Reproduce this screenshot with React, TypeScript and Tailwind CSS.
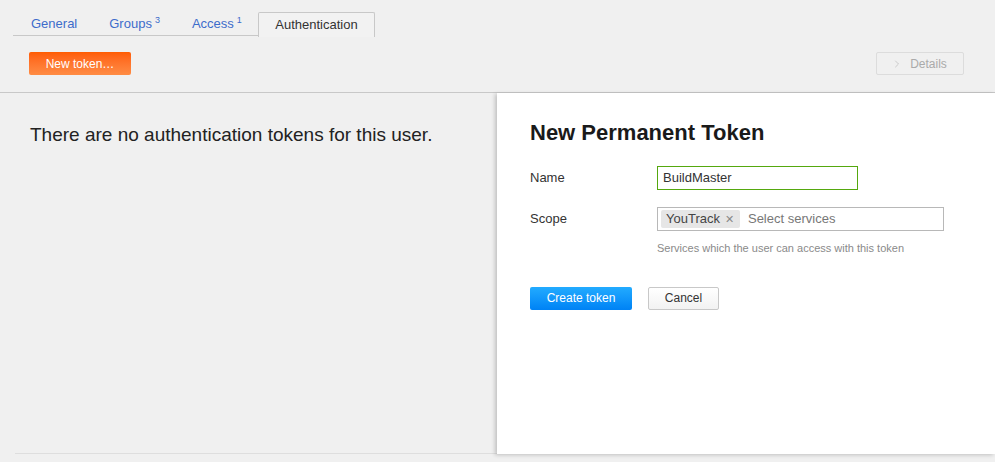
import { ChevronRight } from "lucide-react";

const tabs = [
  { label: "General" },
  { label: "Groups", count: 3 },
  { label: "Access", count: 1 },
];

export default function App() {
  return (
    <div className="w-[995px] h-[462px] overflow-hidden bg-[#f0f0f0] font-['Liberation_Sans',Arial,sans-serif] text-[#333]">
      {/* Cabeçalho com abas e barra de ações */}
      <div className="border-b border-[#c8c8c8] h-[93px]">
        <div className="pt-[12px] pl-[13px]">
          <div className="flex w-[362px] h-[24px] border-b border-[#c8c8c8] text-[13px]">
            {tabs.map((t) => (
              <div key={t.label} className="px-[16px] first:pl-[18px] flex items-center text-[#3d6ccb]">
                {t.label}
                {t.count && <sup className="text-[9px] ml-[3px] -top-[4px]">{t.count}</sup>}
              </div>
            ))}
            <div className="ml-auto w-[117px] h-[25px] flex items-center justify-center border border-b-0 border-[#c8c8c8] rounded-t-[2px] bg-[#f2f2f2] text-[#333]">
              Authentication
            </div>
          </div>
        </div>
        <div className="flex items-center justify-between pl-[29px] pr-[31px] mt-[16px]">
          <button className="w-[102px] h-[23px] rounded-[2px] bg-gradient-to-b from-[#ff5c00] to-[#ff8c44] text-white text-[12px]">
            New token…
          </button>
          <button className="w-[88px] h-[23px] rounded-[2px] border border-[#dcdcdc] flex items-center justify-center gap-[7px] pr-[2px] text-[12px] text-[#aaa]">
            <ChevronRight size={12} strokeWidth={1.2} className="text-[#b0b0b0]" />
            Details
          </button>
        </div>
      </div>

      <div className="flex h-[361px]">
        {/* Lista vazia */}
        <div className="w-[497px] pl-[15px]">
          <div className="h-full border-b border-[#dedede]">
            <p className="pl-[15px] pt-[28px] text-[19px] text-[#222]">
              There are no authentication tokens for this user.
            </p>
          </div>
        </div>

        {/* Painel de novo token */}
        <div className="flex-1 bg-white shadow-[-2px_1px_4px_rgba(0,0,0,0.2)] pl-[33px] pt-[27px]">
          <h2 className="text-[22px] font-bold text-[#1a1a1a] leading-[26px]">New Permanent Token</h2>
          <div className="mt-[20px] flex items-center h-[24px]">
            <label className="w-[127px] text-[13px]">Name</label>
            <div className="w-[201px] h-[24px] border border-[#55a80e] flex items-center px-[5px] text-[13px] text-[#333]">
              BuildMaster
            </div>
          </div>
          <div className="mt-[17px] flex items-center h-[24px]">
            <label className="w-[127px] text-[13px]">Scope</label>
            <div className="w-[287px] h-[24px] border border-[#b8b8b8] flex items-center px-[3px] text-[13px]">
              <span className="h-[18px] flex items-center gap-[5px] bg-[#e6e6e6] rounded-[2px] pl-[5px] pr-[6px] text-[#444]">
                YouTrack <span className="text-[#888] text-[11px]">✕</span>
              </span>
              <span className="ml-[8px] text-[#777]">Select services</span>
            </div>
          </div>
          <p className="ml-[127px] mt-[9px] text-[11px] text-[#8a8a8a]">Services which the user can access with this token</p>
          <div className="mt-[30px] flex gap-[16px]">
            <button className="w-[102px] h-[23px] rounded-[2px] bg-gradient-to-b from-[#22abff] to-[#0082f5] text-white text-[12px]">
              Create token
            </button>
            <button className="w-[71px] h-[23px] rounded-[2px] border border-[#c8c8c8] bg-gradient-to-b from-white to-[#f2f2f2] text-[12px] text-[#333]">
              Cancel
            </button>
          </div>
        </div>
      </div>
    </div>
  );
}
